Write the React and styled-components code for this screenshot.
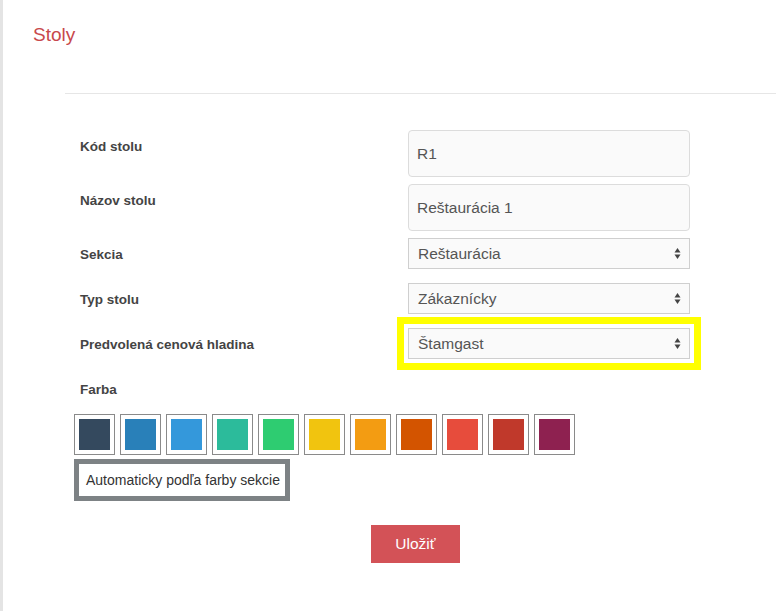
import React from "react";
import styled, { createGlobalStyle } from "styled-components";

const Global = createGlobalStyle`
  html, body { margin: 0; padding: 0; background: #fff; }
  body { font-family: "Liberation Sans", Arial, Helvetica, sans-serif; }
  * { box-sizing: border-box; }
`;

const Page = styled.div`
  display: flex;
  min-height: 100vh;
  width: 776px;
`;

const Strip = styled.div`
  width: 3px;
  flex: none;
  background: #e4e4e4;
`;

const Content = styled.main`
  flex: 1;
  display: flex;
  flex-direction: column;
`;

const Title = styled.h1`
  margin: 0;
  padding: 24px 0 0 30px;
  font-size: 19px;
  line-height: 22px;
  font-weight: normal;
  color: #c8484c;
`;

const Divider = styled.hr`
  margin: 47px 0 0 62px;
  border: none;
  border-top: 1px solid #e6e6e6;
  height: 0;
`;

const Form = styled.form`
  display: flex;
  flex-direction: column;
  padding: 36px 0 0 77px;
`;

const Row = styled.div`
  display: grid;
  grid-template-columns: 328px 282px;
  align-items: start;
  margin-bottom: ${(p) => p.$gap}px;
`;

const Label = styled.label`
  padding-top: 8px;
  font-size: 13.5px;
  line-height: 18px;
  font-weight: bold;
  color: #444;
`;

const TextInput = styled.div`
  height: 47px;
  border: 1px solid #dcdcdc;
  border-radius: 4px;
  background: #fafafa;
  display: flex;
  align-items: center;
  padding: 0 8px;
  font-size: 15.5px;
  color: #555;
`;

const Select = styled.div`
  height: 31px;
  border: 1px solid #cfcfcf;
  background: #fafafa;
  display: flex;
  align-items: center;
  justify-content: space-between;
  padding: 0 8px 0 9px;
  font-size: 15.5px;
  color: #555;
  outline: ${(p) => (p.$highlight ? "7px solid #ffff00" : "none")};
  outline-offset: 4px;
`;

const ColorLabel = styled(Label)`
  padding-top: 0;
  margin: 22px 0 15px 0;
`;

const Swatches = styled.div`
  display: flex;
  gap: 5px;
  margin-left: -6px;
`;

const Swatch = styled.div`
  width: 41px;
  height: 41px;
  padding: 4px;
  border: 1px solid #8a8a8a;
  background: #fff;
  &::after {
    content: "";
    display: block;
    width: 100%;
    height: 100%;
    background: ${(p) => p.$color};
  }
`;

const AutoButton = styled.button`
  align-self: flex-start;
  margin: 4px 0 0 -6px;
  width: 216px;
  height: 42px;
  border: 5px solid #7d8285;
  background: #fff;
  font-family: "Liberation Sans", Arial, Helvetica, sans-serif;
  font-size: 14px;
  color: #333;
  padding: 0 0 0 7px;
  text-align: left;
`;

const Footer = styled.div`
  display: flex;
  padding: 24px 0 0 291px;
`;

const SaveButton = styled.button`
  width: 89px;
  height: 38px;
  border: none;
  background: #d35257;
  color: #fff;
  font-family: "Liberation Sans", Arial, Helvetica, sans-serif;
  font-size: 15.5px;
`;

const Arrows = () => (
  <svg width="7" height="13" viewBox="0 0 7 13" aria-hidden="true">
    <path d="M3.5 1 L6.5 5.5 L0.5 5.5 Z" fill="#444" />
    <path d="M3.5 12 L6.5 7.5 L0.5 7.5 Z" fill="#444" />
  </svg>
);

const colors = [
  "#34495e",
  "#2980b9",
  "#3498db",
  "#2cbb9b",
  "#2ecc71",
  "#f1c40f",
  "#f39c12",
  "#d35400",
  "#e74c3c",
  "#c0392b",
  "#8e2150",
];

export default function App() {
  return (
    <>
      <Global />
      <Page>
        <Strip />
        <Content>
          <Title>Stoly</Title>
          <Divider />
          <Form onSubmit={(e) => e.preventDefault()}>
            <Row $gap={7}>
              <Label>Kód stolu</Label>
              <TextInput>R1</TextInput>
            </Row>
            <Row $gap={7}>
              <Label>Názov stolu</Label>
              <TextInput>Reštaurácia 1</TextInput>
            </Row>
            <Row $gap={14}>
              <Label>Sekcia</Label>
              <Select>
                <span>Reštaurácia</span>
                <Arrows />
              </Select>
            </Row>
            <Row $gap={14}>
              <Label>Typ stolu</Label>
              <Select>
                <span>Zákaznícky</span>
                <Arrows />
              </Select>
            </Row>
            <Row $gap={0}>
              <Label>Predvolená cenová hladina</Label>
              <Select $highlight>
                <span>Štamgast</span>
                <Arrows />
              </Select>
            </Row>
            <ColorLabel>Farba</ColorLabel>
            <Swatches>
              {colors.map((c) => (
                <Swatch key={c} $color={c} />
              ))}
            </Swatches>
            <AutoButton type="button">Automaticky podľa farby sekcie</AutoButton>
            <Footer>
              <SaveButton type="submit">Uložiť</SaveButton>
            </Footer>
          </Form>
        </Content>
      </Page>
    </>
  );
}
